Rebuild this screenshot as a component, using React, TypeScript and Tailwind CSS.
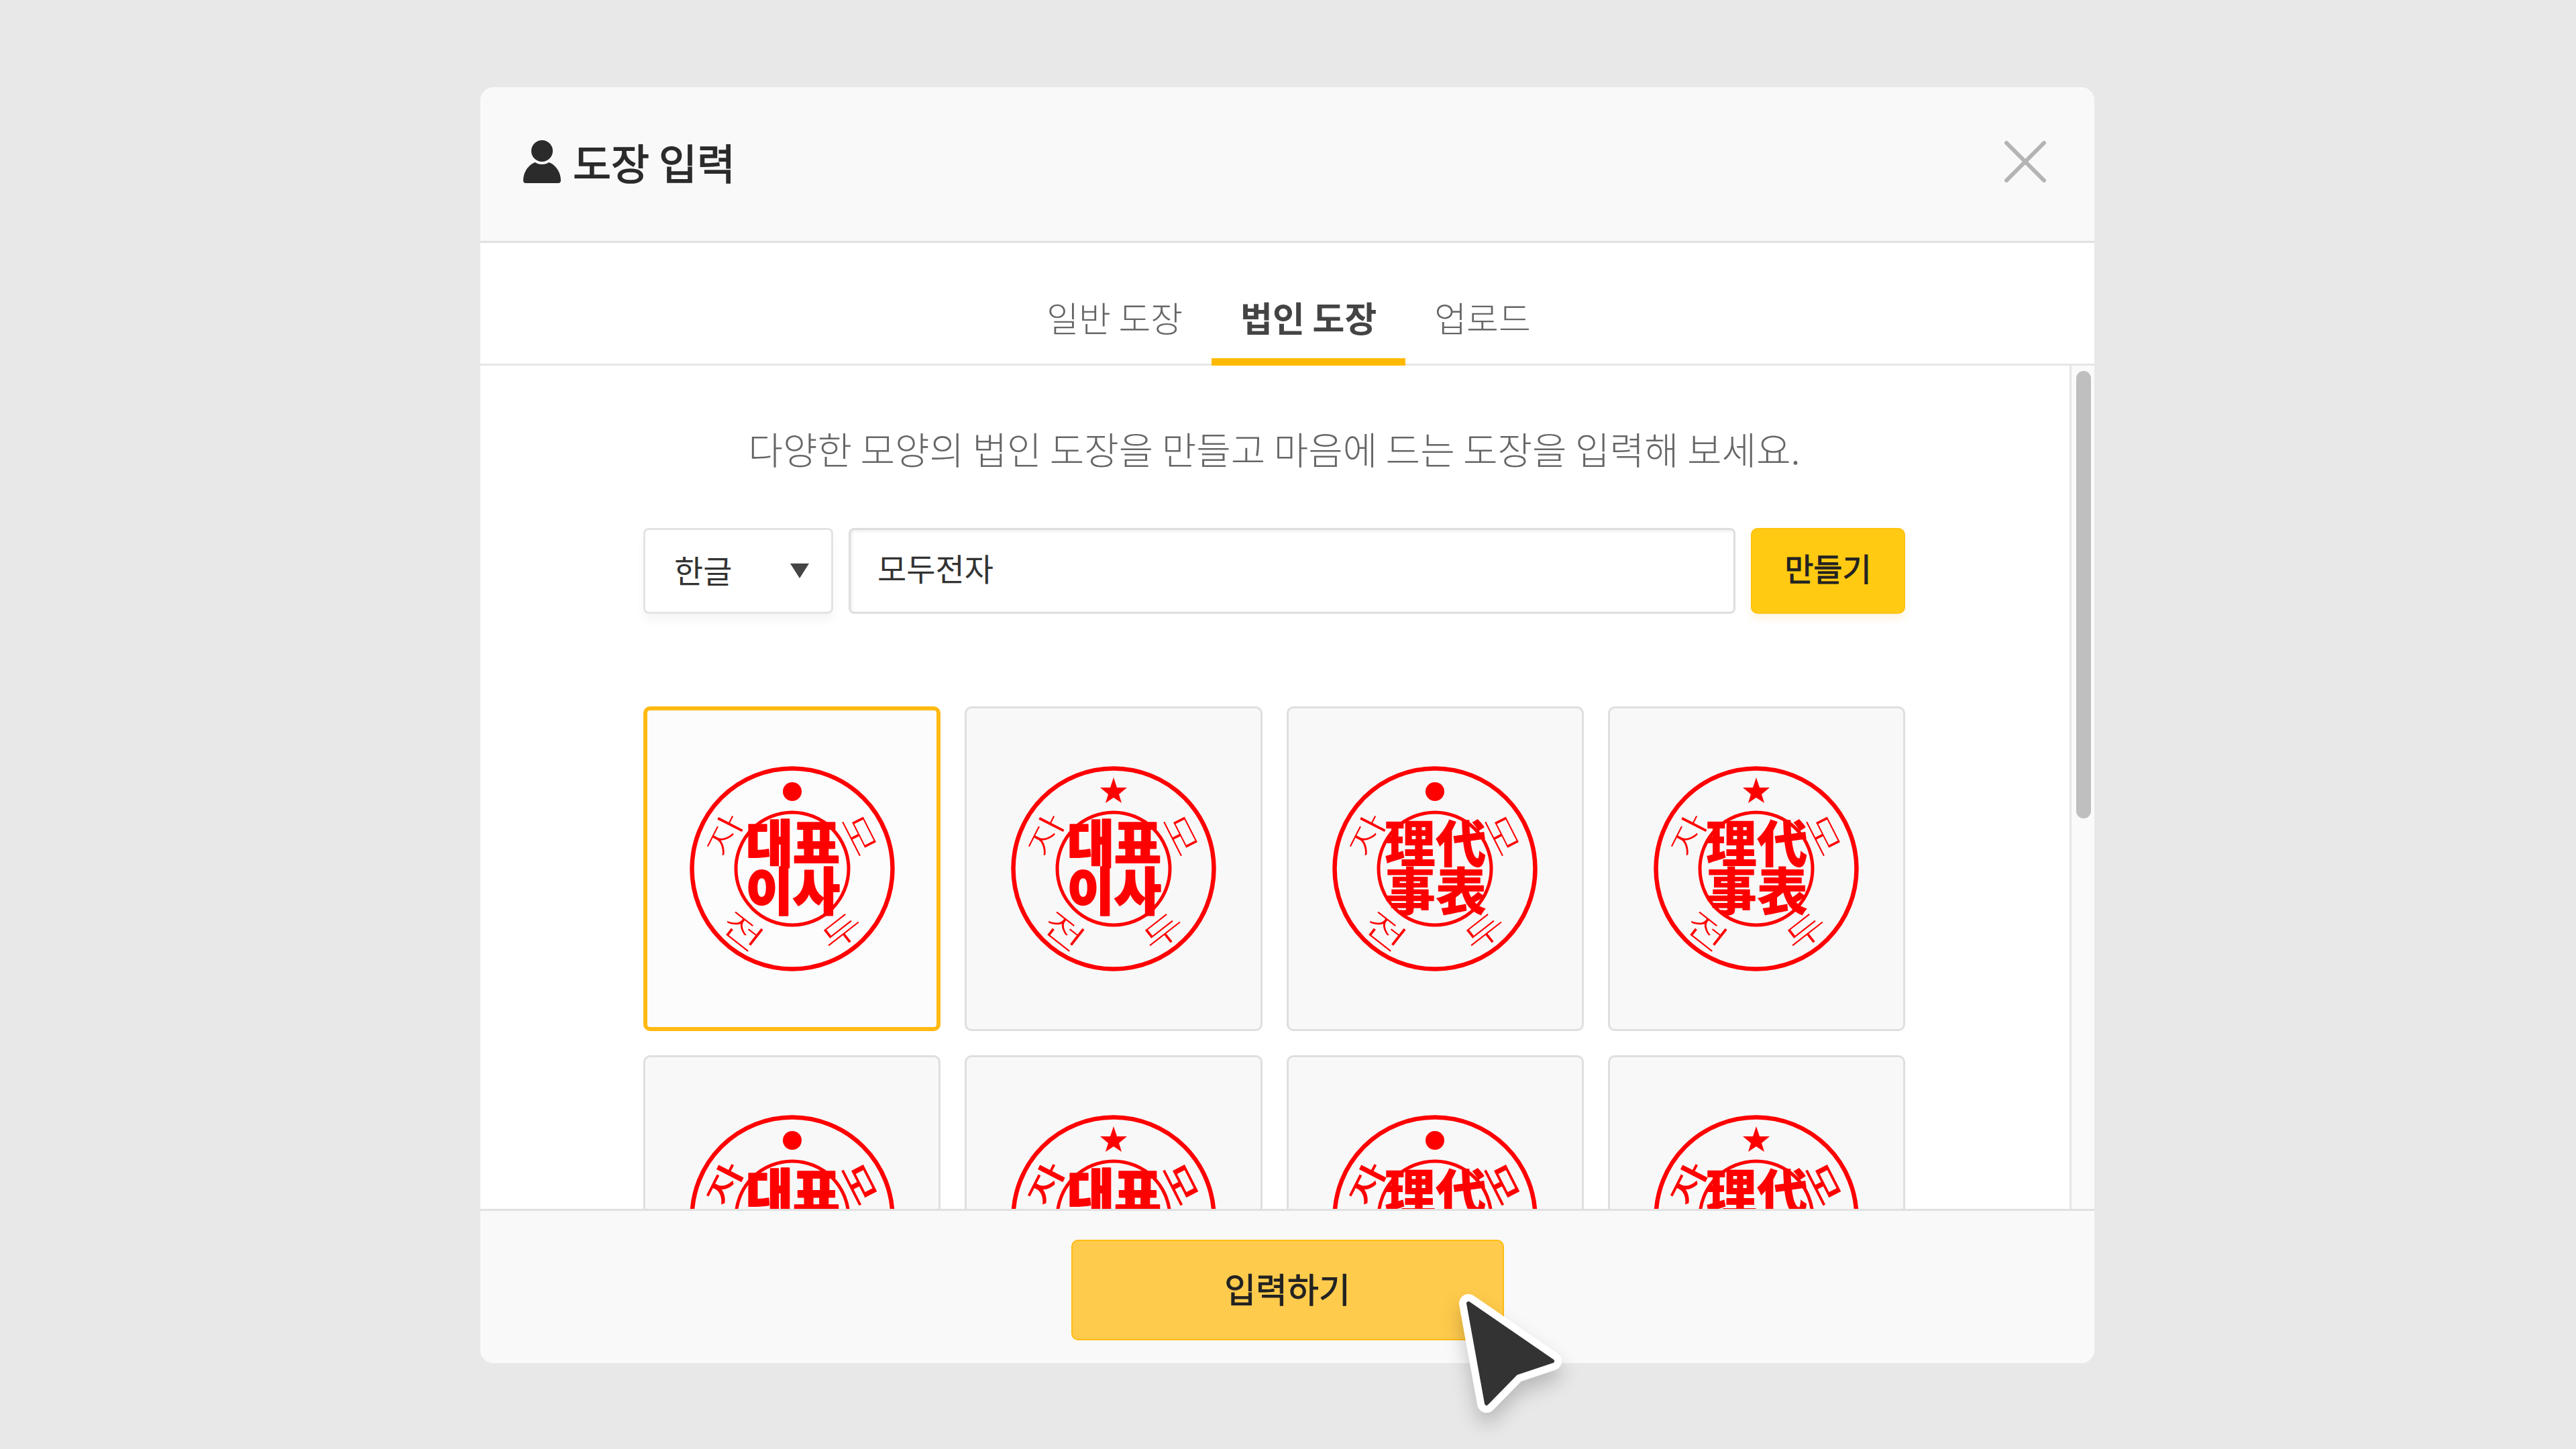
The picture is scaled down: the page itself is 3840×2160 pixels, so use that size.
import React from 'react';

interface StampProps {
  mark: 'dot' | 'star';
  lines: string[];
  bold?: boolean;
  hanja?: boolean;
}

const ring = [
  { char: '자', x: -103, y: -52, angle: -63 },
  { char: '모', x: 103, y: -52, angle: 63 },
  { char: '두', x: 72, y: 91, angle: -38 },
  { char: '전', x: -72, y: 91, angle: 38 }
];

const Stamp: React.FC<StampProps> = ({ mark, lines, bold, hanja }) => {
  const strokeWidth = hanja ? 0 : 2;
  return (
    <svg width="320" height="320" viewBox="-160 -160 320 320" className="font-['Noto_Sans_CJK_KR',sans-serif]">
      <circle cx="0" cy="0" r="149.5" fill="none" stroke="#ff0000" strokeWidth="6.5" />
      <circle cx="0" cy="0" r="84" fill="none" stroke="#ff0000" strokeWidth="5" />
      {mark === 'dot' ? (
        <circle cx="0" cy="-115" r="14" fill="#ff0000" />
      ) : (
        <polygon
          points="0,-136 5,-121 20,-121 8,-111 12,-98 0,-106 -12,-98 -8,-111 -20,-121 -5,-121"
          fill="#ff0000"
        />
      )}
      {ring.map(item => (
        <text
          key={item.char}
          transform={`translate(${item.x} ${item.y}) rotate(${item.angle}) scale(1.3 0.85)`}
          textAnchor="middle"
          dominantBaseline="central"
          fontSize="54"
          fontWeight={bold ? 500 : 300}
          fill="#ff0000"
        >
          {item.char}
        </text>
      ))}
      <text
        x="1"
        y="-9"
        textAnchor="middle"
        fontSize="76"
        fontWeight="900"
        fill="#ff0000"
        stroke="#ff0000"
        strokeWidth={strokeWidth}
        strokeLinejoin="round"
      >
        {lines[0]}
      </text>
      <text
        x="1"
        y="62"
        textAnchor="middle"
        fontSize="76"
        fontWeight="900"
        fill="#ff0000"
        stroke="#ff0000"
        strokeWidth={strokeWidth}
        strokeLinejoin="round"
      >
        {lines[1]}
      </text>
    </svg>
  );
};

const stamps: StampProps[] = [
  { mark: 'dot', lines: ['대표', '이사'] },
  { mark: 'star', lines: ['대표', '이사'] },
  { mark: 'dot', lines: ['理代', '事表'], hanja: true },
  { mark: 'star', lines: ['理代', '事表'], hanja: true },
  { mark: 'dot', lines: ['대표', '이사'], bold: true },
  { mark: 'star', lines: ['대표', '이사'], bold: true },
  { mark: 'dot', lines: ['理代', '事表'], bold: true, hanja: true },
  { mark: 'star', lines: ['理代', '事表'], bold: true, hanja: true }
];

const tabs = ['일반 도장', '법인 도장', '업로드'];

export default function App() {
  return (
    <div className="relative h-[2160px] w-[3840px] overflow-hidden bg-[#e8e8e8] pt-[130px] pl-[716px] font-['Noto_Sans_CJK_KR','Noto_Sans',sans-serif]">
      <div className="flex h-[1902px] w-[2406px] flex-col overflow-hidden rounded-[20px] bg-white">
        <header className="flex h-[232px] shrink-0 items-center justify-between border-b-[3px] border-[#e0e0e0] bg-[#f9f9f9] pr-[72px] pb-[8px] pl-[64px]">
          <div className="flex items-center gap-[18px]">
            <svg width="56" height="64" viewBox="0 0 56 64" fill="#2b2b2b">
              <ellipse cx="28" cy="16" rx="16" ry="16" />
              <path d="M0 60C0 46 10 35 18 33C22 37 34 37 38 33C46 35 56 46 56 60C56 63 54 64 52 64H4C2 64 0 63 0 60Z" />
            </svg>
            <h1 className="text-[62px] leading-none text-[#2b2b2b] [-webkit-text-stroke:1.5px_#2b2b2b]">도장 입력</h1>
          </div>
          <svg width="62" height="62" viewBox="0 0 62 62" stroke="#b4b4b4" strokeWidth="6" fill="none">
            <path d="M1 1L61 61M61 1L1 61" />
          </svg>
        </header>

        <nav className="flex h-[183px] shrink-0 items-stretch justify-center border-b-[3px] border-[#e6e6e6] pl-[4px]">
          {tabs.map((tab, i) => (
            <div
              key={tab}
              className={`-mb-[3px] flex items-center border-b-[11px] px-[43px] pt-[50px] text-[52px] ${
                i === 1 ? 'border-[#ffb900] font-bold text-[#444444]' : 'border-transparent font-light text-[#666666]'
              }`}
            >
              {tab}
            </div>
          ))}
        </nav>

        <div className="flex min-h-0 flex-1">
          <main className="min-w-0 flex-1 overflow-hidden pr-[245px] pl-[243px]">
            <p className="-mx-[243px] mt-[83px] text-center text-[56px] leading-[80px] font-light text-[#666666]">
              다양한 모양의 법인 도장을 만들고 마음에 드는 도장을 입력해 보세요.
            </p>

            <div className="mt-[79px] flex h-[128px] gap-[23px]">
              <div className="flex w-[283px] items-center justify-between rounded-[8px] border-[3px] border-[#e3e3e3] pr-[33px] pl-[43px] shadow-[0_10px_14px_rgba(0,0,0,0.04)]">
                <span className="pb-[4px] text-[47px] text-[#333333]">한글</span>
                <svg width="28" height="22" viewBox="0 0 28 22" fill="#444444">
                  <polygon points="0,0 28,0 14,22" />
                </svg>
              </div>
              <input
                readOnly
                value="모두전자"
                className="min-w-0 flex-1 rounded-[8px] border-[3px] border-[#dedede] pb-[10px] pl-[40px] text-[47px] text-[#333333] shadow-[inset_2px_2px_4px_rgba(0,0,0,0.08)] outline-none"
              />
              <button className="w-[230px] rounded-[10px] border-[2px] border-[#ffc210] bg-[#ffca11] pb-[9px] text-[47px] text-[#222222] shadow-[0_8px_12px_rgba(255,170,0,0.12)] [-webkit-text-stroke:1px_#222222]">
                만들기
              </button>
            </div>

            <div className="mt-[138px] grid grid-cols-4 gap-[36px]">
              {stamps.map((stamp, i) => (
                <div
                  key={i}
                  className={`flex h-[484px] items-center justify-center rounded-[10px] ${
                    i === 0 ? 'border-[6px] border-[#ffb911] bg-[#fcfcfc]' : 'border-[3px] border-[#dfdfdf] bg-[#f8f8f8]'
                  }`}
                >
                  <Stamp {...stamp} />
                </div>
              ))}
            </div>
          </main>

          <aside className="w-[37px] shrink-0 border-l-[3px] border-[#e6e6e6] bg-[#fafafa] pt-[8px] pl-[7px]">
            <div className="h-[667px] w-[22px] rounded-full bg-[#bfbfbf]" />
          </aside>
        </div>

        <footer className="flex h-[230px] shrink-0 items-start justify-center border-t-[3px] border-[#e0e0e0] bg-[#f9f9f9] pt-[43px]">
          <button className="h-[150px] w-[645px] rounded-[10px] border-[2px] border-[#ffbb12] bg-[#ffcb4c] pb-[6px] text-[51px] text-[#222222] [-webkit-text-stroke:1px_#222222]">
            입력하기
          </button>
        </footer>
      </div>

      <svg
        className="absolute top-[1915px] left-[2160px] drop-shadow-[0_16px_14px_rgba(0,0,0,0.2)]"
        width="185"
        height="205"
        viewBox="2160 1915 185 205"
      >
        <path
          d="M2189 1943L2314 2029L2260 2047L2216 2092Z"
          fill="#ffffff"
          stroke="#ffffff"
          strokeWidth="28"
          strokeLinejoin="round"
        />
        <path
          d="M2189 1943L2314 2029L2260 2047L2216 2092Z"
          fill="#333333"
          stroke="#333333"
          strokeWidth="6"
          strokeLinejoin="round"
        />
      </svg>
    </div>
  );
}
